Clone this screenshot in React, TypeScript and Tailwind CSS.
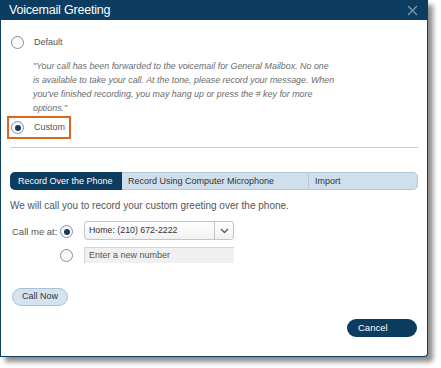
import React from "react";

function Radio({ checked }: { checked?: boolean }) {
  return (
    <span className="relative flex h-[13px] w-[13px] shrink-0 items-center justify-center rounded-full border border-[#7f8f9c] bg-gradient-to-b from-[#f4f6f8] to-white">
      {checked && <span className="h-[6px] w-[6px] rounded-full bg-[#1c3a57]" />}
    </span>
  );
}

const QUOTE = [
  "\"Your call has been forwarded to the voicemail for General Mailbox. No one",
  "is available to take your call. At the tone, please record your message. When",
  "you've finished recording, you may hang up or press the # key for more",
  "options.\"",
];

export default function App() {
  return (
    <div className="h-[368px] w-[441px] bg-white font-['Liberation_Sans',Arial,sans-serif]">
      <div className="flex h-[357px] w-[428px] flex-col rounded-br-[4px] border border-t-0 border-[#0c3c5f] bg-white shadow-[5px_5px_5px_rgba(0,0,0,0.45)]">
        {/* Title bar */}
        <div className="flex h-[20px] shrink-0 items-center justify-between bg-[#0c3c5f] pl-[8px] pr-[9px]">
          <span className="text-[12.5px] leading-none tracking-[-0.2px] text-white">Voicemail Greeting</span>
          <svg width="11" height="11" viewBox="0 0 11 11" className="text-[#7e98ad]">
            <path d="M1 1L10 10M10 1L1 10" stroke="currentColor" strokeWidth="1.3" />
          </svg>
        </div>

        <div className="flex flex-1 flex-col px-[9px]">
          <div className="mt-[16px] flex h-[13px] items-center gap-[10px] pl-[1px]">
            <Radio />
            <span className="text-[9px] text-[#555]">Default</span>
          </div>

          <div className="mt-[10px] pl-[23px] text-[8.9px] italic leading-[14px] text-[#6b6b6b]">
            {QUOTE.map((line) => (
              <p key={line} className="whitespace-nowrap">
                {line}
              </p>
            ))}
          </div>

          <div className="-ml-[3px] mt-[1px] flex h-[23px] w-[64px] items-center gap-[10px] border-2 border-[#d8661d] pl-[2px]">
            <Radio checked />
            <span className="text-[9px] text-[#555]">Custom</span>
          </div>

          <div className="mt-[8px] h-px bg-[#d0d0d0]" />

          {/* Tabs */}
          <div className="mt-[24px] flex h-[18px] whitespace-nowrap text-[9px] leading-none">
            <div className="flex w-[112px] items-center rounded-l-[5px] bg-[#0c3c5f] pl-[8px] text-white">
              Record Over the Phone
            </div>
            <div className="flex w-[186px] items-center border-y border-[#b3c9d8] bg-[#cfe0ec] pl-[6px] text-[#333]">
              Record Using Computer Microphone
            </div>
            <div className="flex flex-1 items-center rounded-r-[5px] border border-[#b3c9d8] bg-[#cfe0ec] pl-[6px] text-[#333]">
              Import
            </div>
          </div>

          <p className="mt-[9px] text-[10px] leading-[14px] text-[#555]">
            We will call you to record your custom greeting over the phone.
          </p>

          <div className="mt-[8px] flex items-start">
            <span className="mt-[4px] w-[50px] pl-[2px] text-[9.5px] text-[#555]">Call me at:</span>
            <div className="flex flex-col gap-[7px]">
              <div className="flex items-center gap-[11px]">
                <span className="mt-[2px]">
                  <Radio checked />
                </span>
                <div className="flex h-[19px] w-[150px] items-center rounded-[3px] border border-[#c4c4c4] bg-gradient-to-b from-white to-[#f1f1f1]">
                  <span className="flex-1 pl-[4px] text-[8.8px] text-[#333]">Home: (210) 672-2222</span>
                  <span className="flex h-full w-[19px] items-center justify-center border-l border-[#c4c4c4]">
                    <svg width="9" height="6" viewBox="0 0 9 6">
                      <path d="M1 1L4.5 4.5L8 1" stroke="#4a6175" strokeWidth="1.4" fill="none" />
                    </svg>
                  </span>
                </div>
              </div>
              <div className="flex items-center gap-[11px]">
                <Radio />
                <div className="flex h-[16px] w-[150px] items-center border-l border-t border-[#d4d4d4] bg-[#f0f0f0] pl-[4px] text-[9px] text-[#555]">
                  Enter a new number
                </div>
              </div>
            </div>
          </div>

          <div className="mt-[25px] pl-[2px]">
            <div className="flex h-[18px] w-[56px] items-center justify-center rounded-full border border-[#a9c2d6] bg-[#d3e3ef] text-[9px] text-[#333]">
              Call Now
            </div>
          </div>

          <div className="mt-[13px] flex justify-end pr-[1px]">
            <div className="flex h-[18px] w-[70px] items-center rounded-full bg-[#0c3c5f] pl-[11px] text-[9.5px] text-white">
              Cancel
            </div>
          </div>
        </div>
      </div>
    </div>
  );
}
